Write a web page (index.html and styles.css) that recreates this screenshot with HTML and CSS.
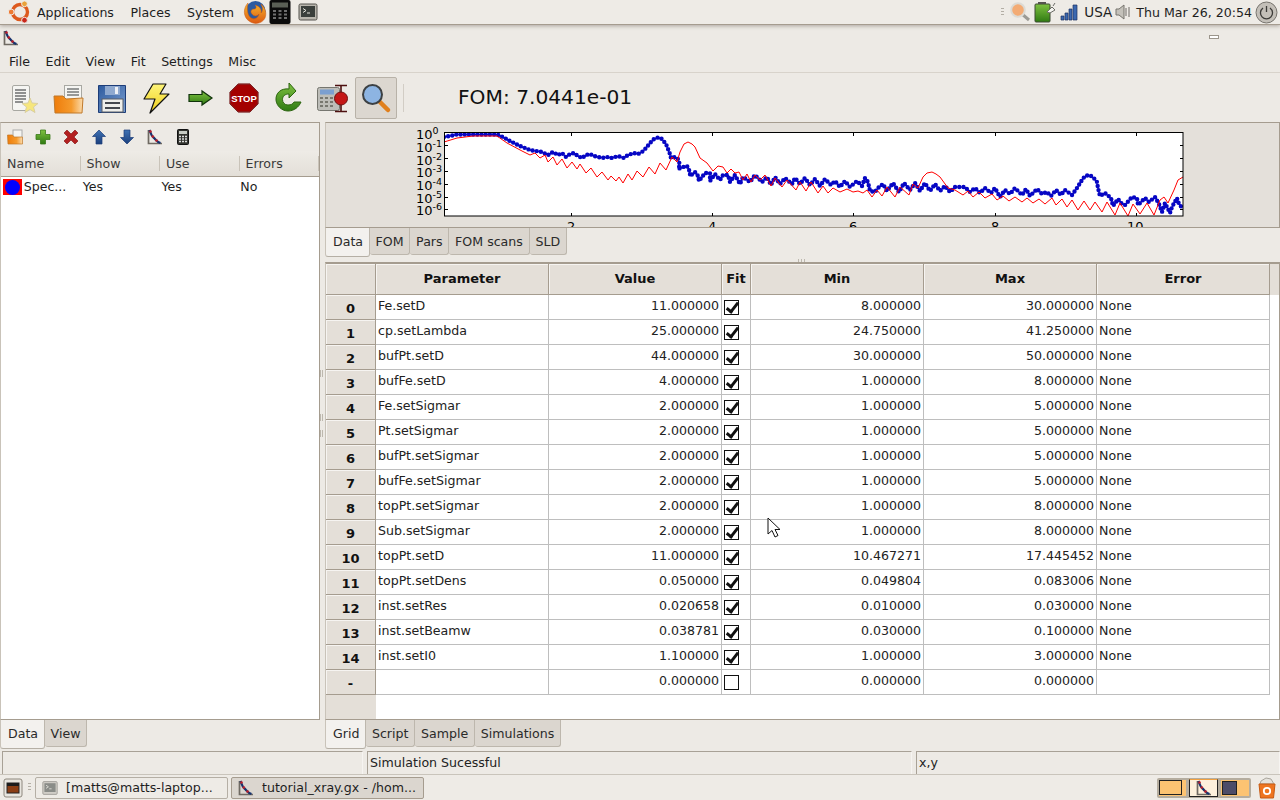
FILE: index.html
```html
<!DOCTYPE html>
<html lang="en">
<head>
    <meta charset="UTF-8">
    <title>GenX</title>
    <link rel="stylesheet" href="styles.css">
</head>
<body>
    <!-- shared icons -->
    <svg class="defs" width="0" height="0">
        <defs>
            <symbol id="logo" viewBox="0 0 16 16">
                <path d="M1.500 1v13.500H15" fill="none" stroke="#6f6a62" stroke-width="1.700"/>
                <path d="M2.500 1C4 5 4.500 7 6.500 8.500s2.500 4 7 5.500" fill="none" stroke="#16336e" stroke-width="2.200"/>
                <circle cx="3.500" cy="2.500" r="1.300" fill="#c0202a"/>
                <circle cx="5.800" cy="7.500" r="1.300" fill="#c0202a"/>
                <circle cx="9.500" cy="11.500" r="1.300" fill="#c0202a"/>
            </symbol>
            <symbol id="term" viewBox="0 0 20 20">
                <rect x="1" y="2" width="18" height="16" rx="1.500" fill="#b9b6ae" stroke="#55534e"/>
                <rect x="3" y="4" width="14" height="11" fill="#3a3f3c"/>
                <path d="M5 6.500l3 2-3 2M9 11h3" fill="none" stroke="#e4e4dc"/>
            </symbol>
            <linearGradient id="orange" x1="0" x2="1" y1="0" y2="0">
                <stop offset="0" stop-color="#ee7c0a"/>
                <stop offset="0.6" stop-color="#f59a2c"/>
                <stop offset="1" stop-color="#fbdcae"/>
            </linearGradient>
            <linearGradient id="blue" x1="0" x2="1" y1="0" y2="1">
                <stop offset="0" stop-color="#2d5a9e"/>
                <stop offset="1" stop-color="#7b9fd0"/>
            </linearGradient>
            <linearGradient id="navy" x1="0" x2="0" y1="0" y2="1">
                <stop offset="0" stop-color="#3f72b4"/>
                <stop offset="1" stop-color="#1b3f7c"/>
            </linearGradient>
            <linearGradient id="green" x1="0" x2="0" y1="0" y2="1">
                <stop offset="0" stop-color="#7fc241"/>
                <stop offset="1" stop-color="#2f7a12"/>
            </linearGradient>
            <linearGradient id="yellow" x1="0" x2="0" y1="0" y2="1">
                <stop offset="0" stop-color="#fdf47a"/>
                <stop offset="1" stop-color="#f0cf1c"/>
            </linearGradient>
            <linearGradient id="fox" x1="0" x2="0" y1="0" y2="1">
                <stop offset="0" stop-color="#f6b52c"/>
                <stop offset="1" stop-color="#dc5a12"/>
            </linearGradient>
        </defs>
    </svg>

    <!-- top gnome panel -->
    <div class="top-panel">
        <div class="panel-left">
            <svg class="ubuntu" width="24" height="24" viewBox="0 0 24 24">
                <circle cx="12" cy="12" r="7.500" fill="none" stroke="#dd5a1e" stroke-width="3.400"/>
                <circle cx="3.200" cy="12" r="2.900" fill="#ee7a32" stroke="#eeebe6"/>
                <circle cx="16.500" cy="3.800" r="2.900" fill="#e9a23a" stroke="#eeebe6"/>
                <circle cx="16.500" cy="20.200" r="2.900" fill="#c9271c" stroke="#eeebe6"/>
            </svg>
            <span class="panel-menu">Applications</span>
            <span class="panel-menu">Places</span>
            <span class="panel-menu">System</span>
            <svg class="launcher" width="24" height="24" viewBox="0 0 24 24">
                <circle cx="12.500" cy="11" r="10" fill="#2c5aa0"/>
                <path d="M5 3C0 8 0 17 6 21c5 4 13 3 16-3 2-5 0-11-4-14 2 4 2 7 0 9 1-4-2-7-6-8 2 2 1 4-1 4-3 0-4 3-2 5 2 3 6 2 7 0-1 5-6 6-9 3C4 14 4 7 5 3z" fill="url(#fox)" stroke="#c9560f" stroke-width="0.500"/>
            </svg>
            <svg class="launcher calc" width="22" height="24" viewBox="0 0 22 24">
                <rect x="0.500" y="0" width="21" height="24" rx="2" fill="#0b0b0b"/>
                <rect x="3" y="2.500" width="16" height="5" fill="#5a5f55"/>
                <path d="M4 11h3M9.500 11h3M15 11h3M4 14.500h3M9.500 14.500h3M15 14.500h3M4 18h3M9.500 18h3M15 18h3" stroke="#6f6f6f" stroke-width="2"/>
            </svg>
            <svg class="launcher term-launch" width="20" height="20"><use href="#term"/></svg>
        </div>
        <div class="panel-right">
            <span class="handle"></span>
            <svg class="tray" width="20" height="20" viewBox="0 0 20 20">
                <path d="M12 12l7 6" stroke="#9c9a94" stroke-width="3"/>
                <circle cx="8" cy="8" r="6.800" fill="#f3ab74" stroke="#dcdad4" stroke-width="2"/>
            </svg>
            <svg class="tray" width="22" height="22" viewBox="0 0 22 22">
                <rect x="1" y="3" width="15" height="18" rx="1" fill="url(#green)" stroke="#3d4a33"/>
                <rect x="4" y="1" width="8" height="2" fill="#55534e"/>
                <path d="M13 11l5-5 3 3-5 3z" fill="#f4f4f0" stroke="#6b6b66"/>
                <path d="M19 5l2-3" stroke="#6b6b66"/>
            </svg>
            <svg class="tray tray-wide" width="18" height="17" viewBox="0 0 18 17">
                <path d="M1 12h3v4H1zM5 9h3v7H5zM9 5h3v11H9zM13 1h4v15h-4z" fill="#3b68b0" stroke="#1d3160" stroke-width="0.700"/>
            </svg>
            <span class="panel-label usa">USA</span>
            <svg class="tray tray-speaker" width="16" height="16" viewBox="0 0 16 16">
                <path d="M1 5h3l5-4v14l-5-4H1z" fill="#c4c1ba" stroke="#77746e"/>
                <path d="M11 4v8M14 3v10" stroke="#6e6b66"/>
            </svg>
            <span class="panel-label clock">Thu Mar 26, 20:54</span>
            <svg class="tray power" width="23" height="23" viewBox="0 0 23 23">
                <circle cx="11.500" cy="11.500" r="10.500" fill="#c3bfb8" stroke="#77746e"/>
                <path d="M8 7a6 6 0 1 0 7 0M11.500 5v6" fill="none" stroke="#3c3b38" stroke-width="1.300"/>
            </svg>
        </div>
    </div>

    <!-- window title bar -->
    <div class="title-bar">
        <svg width="16" height="16"><use href="#logo"/></svg>
        <span class="min-btn"></span>
    </div>

    <div class="menu-bar">
        <span>File</span><span>Edit</span><span>View</span><span>Fit</span><span>Settings</span><span>Misc</span>
    </div>

    <div class="tool-bar">
        <span class="tool">
            <svg width="32" height="32" viewBox="0 0 32 32">
                <rect x="4.500" y="3.500" width="17" height="25" rx="1.500" fill="#f5f5f2" stroke="#a8a8a2"/>
                <path d="M7 8h11M7 11h11M7 14h11M7 17h11M7 20h8" stroke="#6d6f70" stroke-width="1.300"/>
                <path d="M22 16l2 5 6 .5-4.500 3.500 1.500 5.500-5-3-5 3 1.500-5.500L14 21.500l6-.5z" fill="#f6e67c" stroke="#d9cfa0"/>
            </svg>
        </span>
        <span class="tool">
            <svg width="32" height="32" viewBox="0 0 32 32">
                <rect x="12.500" y="3.500" width="17" height="20" fill="#f5f5f2" stroke="#a8a8a2"/>
                <path d="M15 7h12M15 10h12M15 13h12" stroke="#77797a" stroke-width="1.300"/>
                <path d="M2 14h9l3 3 17-1-1 15H3z" fill="url(#orange)" stroke="#c0792a"/>
            </svg>
        </span>
        <span class="tool">
            <svg width="32" height="32" viewBox="0 0 32 32">
                <path d="M2.500 3.500h27v27h-27z" fill="url(#blue)" stroke="#1d3d78"/>
                <rect x="9" y="4" width="15" height="9" fill="#8fa9cf"/>
                <rect x="19" y="5" width="3" height="7" fill="#eef1f6"/>
                <rect x="6" y="17" width="21" height="13" fill="#eeeeea" stroke="#5b5f66"/>
                <path d="M9 21h15M9 26h15" stroke="#44484e" stroke-width="2"/>
            </svg>
        </span>
        <span class="tool">
            <svg width="32" height="32" viewBox="0 0 32 32">
                <path d="M13 2h13l-6 10h9L10 31l5-14H4z" fill="url(#yellow)" stroke="#111" stroke-width="1.200" stroke-linejoin="round"/>
            </svg>
        </span>
        <span class="tool">
            <svg width="32" height="32" viewBox="0 0 32 32">
                <path d="M5 12.500h13V9l10 7-10 7v-3.500H5z" fill="url(#green)" stroke="#10330a" stroke-width="1.200"/>
            </svg>
        </span>
        <span class="tool">
            <svg width="32" height="32" viewBox="0 0 32 32">
                <path d="M10 1h12l9 9v12l-9 9H10l-9-9V10z" fill="#a40000" stroke="#e8e8e4" stroke-width="1"/>
                <path d="M10.300 2h11.400L30 10.300v11.400L21.700 30H10.300L2 21.700V10.300z" fill="none" stroke="#555" stroke-width="0.600"/>
                <text x="16" y="20" class="stop-text">STOP</text>
            </svg>
        </span>
        <span class="tool">
            <svg width="32" height="32" viewBox="0 0 32 32">
                <path d="M17 7C9 6 3.500 11 4 18c.5 6 6 11 12 11s11-4 13-9h-7c-1 2-3 3-6 3-3.500 0-5.500-2.500-5.500-5.500C10.500 14 13 12 17 12v4l7-7-7-8z" fill="url(#green)" stroke="#2c6410"/>
            </svg>
        </span>
        <span class="tool">
            <svg width="32" height="32" viewBox="0 0 32 32">
                <rect x="1.500" y="5.500" width="22" height="23" rx="2" fill="#bdbdb8" stroke="#76766f"/>
                <rect x="4" y="7.500" width="14" height="5" fill="#7b9fd0"/>
                <path d="M4 16h3M9 16h3M14 16h3M4 20h3M9 20h3M14 20h3M4 24h3M9 24h3M14 24h3" stroke="#77776f" stroke-width="2"/>
                <path d="M20 3.500h12M20 29.500h12M26 3.500v26" stroke="#4d1010" stroke-width="1.600" transform="translate(-1 0)"/>
                <circle cx="25" cy="16.500" r="6.500" fill="#c41616" stroke="#701010"/>
            </svg>
        </span>
        <span class="tool tool-on">
            <svg width="32" height="32" viewBox="0 0 32 32">
                <path d="M19 19l9 9" stroke="#e0801e" stroke-width="4.500" stroke-linecap="round"/>
                <circle cx="12.500" cy="12.500" r="9.500" fill="#8db4e2" stroke="#3c4043" stroke-width="2"/>
            </svg>
        </span>
        <span class="tool-sep"></span>
        <span class="fom">FOM: 7.0441e-01</span>
    </div>

    <div class="main">
        <!-- left pane: data sets -->
        <div class="side">
            <div class="side-box">
                <div class="side-tools">
                    <svg width="16" height="16" viewBox="0 0 16 16">
                        <rect x="6" y="1" width="9" height="9" fill="#f5f5f2" stroke="#aaa"/>
                        <path d="M0.500 6h5l1.500 2h8.500v7H1z" fill="url(#orange)" stroke="#c0792a" stroke-width="0.700"/>
                    </svg>
                    <svg width="16" height="16" viewBox="0 0 16 16">
                        <path d="M5.500 1h5v4.500H15v5h-4.500V15h-5v-4.500H1v-5h4.500z" fill="url(#green)" stroke="#3a7a1a" stroke-width="0.800"/>
                    </svg>
                    <svg width="16" height="16" viewBox="0 0 16 16">
                        <path d="M4 1l4 4 4-4 3 3-4 4 4 4-3 3-4-4-4 4-3-3 4-4-4-4z" fill="#b32020" stroke="#8a1d1d" stroke-width="0.700"/>
                    </svg>
                    <svg width="16" height="16" viewBox="0 0 16 16">
                        <path d="M8 1l6.500 6.500H11V15H5V7.500H1.500z" fill="url(#navy)" stroke="#1d3d78" stroke-width="0.700"/>
                    </svg>
                    <svg width="16" height="16" viewBox="0 0 16 16">
                        <path d="M8 15l6.500-6.500H11V1H5v7.500H1.500z" fill="url(#navy)" stroke="#1d3d78" stroke-width="0.700"/>
                    </svg>
                    <svg width="16" height="16"><use href="#logo"/></svg>
                    <svg width="16" height="16" viewBox="0 0 16 16">
                        <rect x="2.500" y="0.500" width="11" height="15" rx="1" fill="#33342f" stroke="#111"/>
                        <rect x="4" y="2" width="8" height="3" fill="#c8ccc4"/>
                        <path d="M4 7.500h2M7 7.500h2M10 7.500h2M4 10h2M7 10h2M10 10h2M4 12.500h2M7 12.500h2M10 12.500h2" stroke="#ddd" stroke-width="1.300"/>
                    </svg>
                </div>
                <div class="list-head">
                    <span>Name</span><span>Show</span><span>Use</span><span>Errors</span>
                </div>
                <div class="list-row">
                    <span class="swatch"><i></i></span>
                    <span class="list-name">Spec...</span>
                    <span class="list-col">Yes</span>
                    <span class="list-col">Yes</span>
                    <span class="list-col">No</span>
                </div>
            </div>
            <div class="tabs">
                <span class="tab on">Data</span><span class="tab">View</span>
            </div>
        </div>

        <div class="sash">
            <i class="grip g1"></i><i class="grip g2"></i><i class="grip g3"></i>
        </div>

        <!-- right pane -->
        <div class="work">
            <div class="plot-box">
                <svg class="plot" width="954" height="104" viewBox="326 123 954 104">
                    <defs>
                        <clipPath id="axes"><rect x="444" y="132" width="739" height="84"/></clipPath>
                    </defs>
                    <rect x="444" y="132" width="739" height="84" fill="#fff"/>
                    <g clip-path="url(#axes)" fill="none">
                        <path class="blue-dots" d="M444 137L450 136 456 134.500 497 134.500 503 137 510 141 520 146 530 150 536 151 542 152 548 155 553 152 558 155 562 153 566 157 570 154 574 153 578 156 582 158 586 155 590 154 594 156 598 157 602 158 608 157 612 158 618 156 624 158 628 155 634 153 638 154 642 152 646 148 650 143 654 139 658 137.500 662 139 666 144 668 149 670 154 671 158 675 157 678 159 680 165 678 169 683 167 687 166 690 172 690 176 695 172 698 176 699 181 705 173 710 173 710 181 715 174 720 180 723 175 728 175 730 182 735 175 740 184 743 177 750 182 755 175 762 182 767 177 771 185 775 177 780 184 785 178 792 184 795 178 800 184 805 178 810 185 815 179 820 186 825 179 831 185 835 181 840 187 845 181 850 187 857 181 862 186 865 178 868 182 870 191 875 192 878 188 883 184 887 191 893 183 899 192 904 183 910 190 915 183 920 191 925 183 930 191 935 184 940 191 945 186 950 192 955 187 965 187 970 192 975 188 980 193 985 188 991 193 995 188 1000 197 1005 190 1010 194 1015 188 1022 195 1026 189 1030 196 1037 189 1042 194 1047 192 1051 196 1056 190 1061 195 1065 190 1072 195 1077 188 1082 180 1085 176 1089 175 1093 177 1097 182 1098 188 1100 196 1105 193 1111 198 1113 206 1118 199 1121 203 1125 205 1132 197 1137 198 1138 205 1145 198 1149 202 1155 197 1159 204 1162 212 1165 203 1170 213 1172 207 1177 198 1178 202 1182 208"/>
                        <path class="red-line" d="M444 142L457 138 473 136 497 136 507 143 522 151 530 155 535 153 540 158 545 155 548 162 553 157 557 165 562 159 567 168 572 162 577 169 580 164 586 173 591 168 597 177 602 172 608 180 611 176 616 181 619 177 623 183 628 174 632 180 637 171 643 177 649 167 655 174 660 163 666 170 672 157 677 162 680 152 684 144 688 142 692 144 695 147 700 158 707 163 713 171 718 166 723 167 727 173 731 169 735 173 739 172 743 180 747 174 751 182 755 175 760 180 765 175 771 186 775 178 782 187 787 180 796 190 800 182 806 191 811 182 818 193 823 186 828 193 833 188 840 192 847 189 853 192 858 191 863 193 867 190 872 197 877 190 882 196 887 187 895 197 900 187 909 195 913 184 918 188 923 177 927 173 932 172 936 174 940 177 948 188 955 190 963 195 968 191 973 197 979 192 985 198 992 194 997 200 1003 196 1009 201 1015 197 1022 202 1027 198 1033 203 1039 199 1045 204 1052 198 1056 205 1062 199 1067 207 1072 200 1078 210 1084 201 1090 210 1095 202 1102 212 1107 202 1115 215 1120 203 1128 216 1133 204 1140 214 1147 203 1154 215 1160 200 1164 197 1168 203 1174 190 1178 180 1183 177"/>
                    </g>
                    <rect x="444.500" y="132.500" width="738.500" height="83.500" fill="none" stroke="#000"/>
                    <path class="ticks" d="M571.500 133v3M712.500 133v3M853.500 133v3M995.500 133v3M1136.500 133v3M571.500 216v-3M712.500 216v-3M853.500 216v-3M995.500 216v-3M1136.500 216v-3M445 145.500h3M445 158.500h3M445 171.500h3M445 184.500h3M445 197.500h3M445 209.500h3M1183 145.500h-3M1183 158.500h-3M1183 171.500h-3M1183 184.500h-3M1183 197.500h-3M1183 209.500h-3"/>
                    <g class="tick-label">
                        <text x="416" y="139">10<tspan class="sup" dy="-5">0</tspan></text>
                        <text x="416" y="152">10<tspan class="sup" dy="-5">-1</tspan></text>
                        <text x="416" y="165">10<tspan class="sup" dy="-5">-2</tspan></text>
                        <text x="416" y="177">10<tspan class="sup" dy="-5">-3</tspan></text>
                        <text x="416" y="190">10<tspan class="sup" dy="-5">-4</tspan></text>
                        <text x="416" y="203">10<tspan class="sup" dy="-5">-5</tspan></text>
                        <text x="416" y="215">10<tspan class="sup" dy="-5">-6</tspan></text>
                        <text x="567" y="231">2</text>
                        <text x="708" y="231">4</text>
                        <text x="849" y="231">6</text>
                        <text x="991" y="231">8</text>
                        <text x="1127" y="231">10</text>
                    </g>
                </svg>
            </div>
            <div class="tabs tabs-plot">
                <span class="tab on">Data</span><span class="tab">FOM</span><span class="tab">Pars</span><span class="tab">FOM scans</span><span class="tab">SLD</span>
            </div>
            <div class="pane-sash"><i></i></div>
            <div class="grid-box">
                <table class="grid">
                    <colgroup>
                        <col class="c-row"><col class="c-wide"><col class="c-wide"><col class="c-fit"><col class="c-wide"><col class="c-wide"><col class="c-wide">
                    </colgroup>
                    <thead>
                        <tr><th></th><th>Parameter</th><th>Value</th><th>Fit</th><th>Min</th><th>Max</th><th>Error</th></tr>
                    </thead>
                    <tbody>
                        <tr><th>0</th><td>Fe.setD</td><td class="num">11.000000</td><td class="chk"><i class="box on"></i></td><td class="num">8.000000</td><td class="num">30.000000</td><td>None</td></tr>
                        <tr><th>1</th><td>cp.setLambda</td><td class="num">25.000000</td><td class="chk"><i class="box on"></i></td><td class="num">24.750000</td><td class="num">41.250000</td><td>None</td></tr>
                        <tr><th>2</th><td>bufPt.setD</td><td class="num">44.000000</td><td class="chk"><i class="box on"></i></td><td class="num">30.000000</td><td class="num">50.000000</td><td>None</td></tr>
                        <tr><th>3</th><td>bufFe.setD</td><td class="num">4.000000</td><td class="chk"><i class="box on"></i></td><td class="num">1.000000</td><td class="num">8.000000</td><td>None</td></tr>
                        <tr><th>4</th><td>Fe.setSigmar</td><td class="num">2.000000</td><td class="chk"><i class="box on"></i></td><td class="num">1.000000</td><td class="num">5.000000</td><td>None</td></tr>
                        <tr><th>5</th><td>Pt.setSigmar</td><td class="num">2.000000</td><td class="chk"><i class="box on"></i></td><td class="num">1.000000</td><td class="num">5.000000</td><td>None</td></tr>
                        <tr><th>6</th><td>bufPt.setSigmar</td><td class="num">2.000000</td><td class="chk"><i class="box on"></i></td><td class="num">1.000000</td><td class="num">5.000000</td><td>None</td></tr>
                        <tr><th>7</th><td>bufFe.setSigmar</td><td class="num">2.000000</td><td class="chk"><i class="box on"></i></td><td class="num">1.000000</td><td class="num">5.000000</td><td>None</td></tr>
                        <tr><th>8</th><td>topPt.setSigmar</td><td class="num">2.000000</td><td class="chk"><i class="box on"></i></td><td class="num">1.000000</td><td class="num">8.000000</td><td>None</td></tr>
                        <tr><th>9</th><td>Sub.setSigmar</td><td class="num">2.000000</td><td class="chk"><i class="box on"></i></td><td class="num">1.000000</td><td class="num">8.000000</td><td>None</td></tr>
                        <tr><th>10</th><td>topPt.setD</td><td class="num">11.000000</td><td class="chk"><i class="box on"></i></td><td class="num">10.467271</td><td class="num">17.445452</td><td>None</td></tr>
                        <tr><th>11</th><td>topPt.setDens</td><td class="num">0.050000</td><td class="chk"><i class="box on"></i></td><td class="num">0.049804</td><td class="num">0.083006</td><td>None</td></tr>
                        <tr><th>12</th><td>inst.setRes</td><td class="num">0.020658</td><td class="chk"><i class="box on"></i></td><td class="num">0.010000</td><td class="num">0.030000</td><td>None</td></tr>
                        <tr><th>13</th><td>inst.setBeamw</td><td class="num">0.038781</td><td class="chk"><i class="box on"></i></td><td class="num">0.030000</td><td class="num">0.100000</td><td>None</td></tr>
                        <tr><th>14</th><td>inst.setI0</td><td class="num">1.100000</td><td class="chk"><i class="box on"></i></td><td class="num">1.000000</td><td class="num">3.000000</td><td>None</td></tr>
                        <tr><th>-</th><td></td><td class="num">0.000000</td><td class="chk"><i class="box"></i></td><td class="num">0.000000</td><td class="num">0.000000</td><td></td></tr>
                    </tbody>
                </table>
                <div class="grid-rest"></div>
            </div>
            <div class="tabs">
                <span class="tab on">Grid</span><span class="tab">Script</span><span class="tab">Sample</span><span class="tab">Simulations</span>
            </div>
        </div>
    </div>

    <div class="status-bar">
        <span class="field f1"></span>
        <span class="field f2">Simulation Sucessful</span>
        <span class="field f3">x,y</span>
    </div>

    <!-- bottom gnome panel -->
    <div class="bottom-panel">
        <svg class="show-desk" width="20" height="20" viewBox="0 0 20 20">
            <rect x="1" y="1" width="18" height="18" rx="2" fill="#e8e5df" stroke="#8e887e"/>
            <rect x="4" y="5" width="12" height="10" fill="#8a3d14" stroke="#222"/>
            <rect x="4" y="5" width="12" height="3" fill="#1c1c1c"/>
        </svg>
        <span class="handle low"></span>
        <div class="task">
            <svg class="dim" width="16" height="16"><use href="#term"/></svg>
            <span>[matts@matts-laptop...</span>
        </div>
        <div class="task task-on">
            <svg width="16" height="16"><use href="#logo"/></svg>
            <span>tutorial_xray.gx - /hom...</span>
        </div>
        <div class="pager">
            <span class="desk d1"><i></i></span>
            <span class="desk d2"><svg width="16" height="16"><use href="#logo"/></svg></span>
            <span class="desk d3"><i></i></span>
        </div>
        <svg class="trash" width="20" height="22" viewBox="0 0 20 22">
            <path d="M3 7l1-3 5-3 5 1 3 5z" fill="#e5e2dc" stroke="#a9a59c"/>
            <path d="M2 7h16l-1.500 14h-13z" fill="#ee7520" stroke="#c65a12"/>
            <circle cx="10" cy="14" r="3.200" fill="none" stroke="#fff" stroke-width="1.800"/>
        </svg>
    </div>

    <!-- mouse pointer -->
    <svg class="cursor" width="14" height="22" viewBox="0 0 14 22">
        <path d="M1 1v16l4-3.500 3 6.500 3-1.500-3-6h5z" fill="#fff" stroke="#111"/>
    </svg>
</body>
</html>
```

FILE: styles.css
```css
/* base */
html, body {
    margin: 0;
    padding: 0;
}

body {
    position: relative;
    width: 1280px;
    height: 800px;
    overflow: hidden;
    display: flex;
    flex-direction: column;
    background-color: #edeae5;
    color: #1e1e1e;
    font-family: "DejaVu Sans", sans-serif;
    font-size: 12.600px;
}

svg {
    display: block;
    flex: none;
}

.defs {
    position: absolute;
}

/* top panel */
.top-panel {
    height: 25px;
    flex: none;
    display: flex;
    justify-content: space-between;
    box-sizing: border-box;
    border-bottom: 1px solid #a59c8f;
    box-shadow: 0 1px 4px rgba(90, 80, 70, 0.45);
    background-color: #eeebe6;
    position: relative;
}

.panel-left, .panel-right {
    display: flex;
    align-items: center;
}

.ubuntu {
    margin-left: 8px;
    margin-right: 5px;
}

.panel-menu {
    margin-right: 16.500px;
}

.launcher {
    margin-left: -7px;
    margin-right: 2px;
}

.calc {
    margin-left: 0;
    margin-right: 0;
}

.term-launch {
    margin-left: 7px;
    margin-right: 0;
}

.handle {
    width: 3px;
    height: 9px;
    margin-right: 6px;
    background: repeating-linear-gradient(#b3aea5 0 1px, transparent 1px 3px);
}

.tray {
    margin-right: 4px;
}

.tray-wide {
    margin-right: 6px;
}

.tray-speaker {
    margin-right: 5px;
}

.usa {
    margin-right: 3px;
    font-size: 13.500px;
}

.clock {
    margin-right: 3px;
}

.power {
    margin-right: 2px;
}

/* window chrome */
.title-bar {
    height: 25px;
    flex: none;
    display: flex;
    align-items: center;
    justify-content: space-between;
    padding: 0 61px 0 3px;
    box-sizing: border-box;
}

.min-btn {
    width: 8px;
    height: 2px;
    border: 1px solid #9c968c;
    background-color: #fff;
    margin-top: -1px;
}

.menu-bar {
    height: 23px;
    flex: none;
    display: flex;
    gap: 15.500px;
    align-items: center;
    padding-left: 9px;
    box-sizing: border-box;
    border-bottom: 1px solid #d8d3cb;
}

.tool-bar {
    height: 49px;
    flex: none;
    display: flex;
    align-items: center;
    padding-left: 2px;
    box-sizing: border-box;
}

.tool {
    width: 44px;
    height: 42px;
    display: flex;
    align-items: center;
    justify-content: center;
    box-sizing: border-box;
}

.tool-on {
    width: 42px;
    margin-left: 1px;
    background-color: #dcd7d0;
    border: 1px solid #b8b2a8;
    border-radius: 2px;
}

.tool-sep {
    width: 1px;
    height: 28px;
    margin-left: 6px;
    background-color: #d2cdc5;
}

.fom {
    margin-left: 54px;
    margin-top: -2px;
    font-size: 20.200px;
    color: #111;
}

.stop-text {
    font-family: "Liberation Sans", sans-serif;
    font-size: 9.500px;
    font-weight: bold;
    fill: #fff;
    text-anchor: middle;
}

/* main area */
.main {
    height: 629px;
    flex: none;
    display: flex;
}

.side {
    width: 320px;
    flex: none;
    display: flex;
    flex-direction: column;
}

.side-box {
    flex: 1;
    display: flex;
    flex-direction: column;
    background-color: #fff;
    border: 1px solid #a59c8f;
    border-left-color: #c9c3b9;
    box-sizing: border-box;
}

.side-tools {
    height: 28px;
    flex: none;
    display: flex;
    gap: 12px;
    align-items: center;
    padding-left: 6px;
    background-color: #edeae5;
}

.list-head {
    height: 26px;
    flex: none;
    display: flex;
    box-sizing: border-box;
    align-items: center;
    border-bottom: 1px solid #a59c8f;
    background: linear-gradient(#eeebe6, #e3dfd8);
    color: #3a3a3a;
}

.list-head span {
    width: 80px;
    box-sizing: border-box;
    padding-left: 6px;
    border-right: 1px solid #c9c3b9;
}

.list-row {
    height: 20px;
    flex: none;
    display: flex;
    align-items: center;
}

.swatch {
    width: 19px;
    height: 16px;
    margin-left: 2px;
    background-color: #f00;
    display: flex;
    align-items: center;
    justify-content: center;
}

.swatch i {
    width: 15px;
    height: 15px;
    border-radius: 50%;
    background-color: #00f;
}

.list-name {
    width: 62px;
    padding-left: 2px;
    padding-bottom: 2px;
    box-sizing: border-box;
}

.list-col {
    width: 80px;
    padding-bottom: 2px;
}

.tabs {
    height: 31px;
    flex: none;
    display: flex;
    align-items: flex-start;
}

.tab {
    height: 27px;
    line-height: 27px;
    padding: 0 5.750px;
    box-sizing: border-box;
    background-color: #dbd6cf;
    border: 1px solid #bdb7ad;
    border-top: none;
    border-left: none;
    border-radius: 0 0 3px 3px;
    color: #2a2a2a;
}

.tab.on {
    height: 29px;
    padding-left: 7px;
    line-height: 28px;
    background-color: #f3f1ee;
    border-left: 1px solid #c9c3b9;
    border-bottom-color: #b5afa5;
}

.sash {
    width: 5px;
    flex: none;
    position: relative;
}

.grip {
    position: absolute;
    left: 0;
    width: 3px;
    height: 7px;
    background: repeating-linear-gradient(90deg, #bdb8ae 0 1px, transparent 1px 2px);
}

.g1 { top: 248px; }
.g2 { top: 292px; }
.g3 { top: 308px; }

.work {
    flex: 1;
    min-width: 0;
    display: flex;
    flex-direction: column;
}

.plot-box {
    height: 106px;
    flex: none;
    box-sizing: border-box;
    border: 1px solid #a59c8f;
    border-left-color: #c9c3b9;
    background-color: #e4e0da;
}

.blue-dots {
    stroke: #0606c4;
    stroke-width: 4.400;
    stroke-linecap: round;
    stroke-dasharray: 0 4.200;
}

.red-line {
    stroke: #f00;
    stroke-width: 1;
}

.ticks {
    stroke: #000;
    stroke-width: 1;
    fill: none;
}

.tick-label {
    font-size: 13px;
    fill: #000;
}

.sup {
    font-size: 9.500px;
}

.tabs-plot {
    height: 29px;
}

.pane-sash {
    height: 5px;
    flex: none;
    position: relative;
}

.pane-sash i {
    position: absolute;
    left: 473px;
    top: 2px;
    width: 7px;
    height: 3px;
    background: repeating-linear-gradient(90deg, #bdb8ae 0 1px, transparent 1px 3px);
}

/* parameter grid */
.grid-box {
    flex: 1;
    min-height: 0;
    display: flex;
    flex-direction: column;
    box-sizing: border-box;
    border: 1px solid #a59c8f;
    border-left-color: #c9c3b9;
    border-top: 2px solid #a59c8f;
    background:
        linear-gradient(#e4dfd8, #e4dfd8) 0 0 / 50px 100% no-repeat,
        linear-gradient(#e4dfd8, #e4dfd8) 0 0 / 100% 31px no-repeat,
        #fff;
}

.grid {
    table-layout: fixed;
    width: 944px;
    border-collapse: separate;
    border-spacing: 0;
    flex: none;
}

.c-row { width: 50px; }
.c-wide { width: 173px; }
.c-fit { width: 29px; }

.grid th, .grid td {
    box-sizing: border-box;
    padding: 0 2px 3px;
    height: 25px;
    color: #222;
    overflow: hidden;
    white-space: nowrap;
}

.grid th {
    background-color: #e4dfd8;
    box-shadow: inset 1px 1px 0 #f6f4f1;
    border-right: 1px solid #a59c8f;
    border-bottom: 1px solid #a59c8f;
    color: #111;
    padding-bottom: 0;
    font-size: 13px;
}

.grid thead th {
    height: 31px;
    padding-bottom: 2px;
}

.grid tbody th {
    padding-top: 2px;
}

.grid td {
    background-color: #fff;
    border-right: 1px solid #bebebe;
    border-bottom: 1px solid #bebebe;
}

.grid .num {
    text-align: right;
}

.grid .chk {
    padding: 1px 0 0 2px;
}

.box {
    display: block;
    position: relative;
    width: 13px;
    height: 13px;
    border: 1px solid #111;
    background-color: #fff;
}

.box.on::after {
    content: "";
    position: absolute;
    left: 4px;
    top: -1px;
    width: 4px;
    height: 10px;
    border: solid #111;
    border-width: 0 3px 3px 0;
    transform: rotate(38deg);
}

.grid-rest {
    flex: 1;
}

/* status bar */
.status-bar {
    height: 23px;
    flex: none;
    display: flex;
    gap: 4px;
    padding-left: 2px;
    box-sizing: border-box;
}

.field {
    box-sizing: border-box;
    padding-left: 2px;
    line-height: 21px;
    border-top: 1px solid #a8a196;
    border-left: 1px solid #a8a196;
    border-right: 1px solid #f6f4f1;
    color: #222;
}

.f1 { width: 361px; }
.f2 { width: 545px; }
.f3 { flex: 1; }

/* bottom panel */
.bottom-panel {
    height: 26px;
    flex: none;
    display: flex;
    align-items: center;
    box-sizing: border-box;
    border-top: 1px solid #c9c4bb;
    background-color: #eeebe6;
    padding-left: 3px;
}

.show-desk {
    margin-right: 5px;
}

.handle.low {
    margin-right: 4px;
}

.task {
    width: 193px;
    height: 22px;
    box-sizing: border-box;
    margin-right: 3px;
    display: flex;
    align-items: center;
    gap: 8px;
    padding-left: 6px;
    border: 1px solid #b5afa5;
    border-radius: 2px;
    background-color: #eeebe6;
}

.task-on {
    background-color: #dbd6cf;
    border-color: #a59c8f;
}

.dim {
    opacity: 0.55;
}

.pager {
    margin-left: auto;
    width: 94px;
    height: 20px;
    display: flex;
    gap: 2px;
    padding: 1px;
    box-sizing: border-box;
    background-color: #b5ad9f;
    border-radius: 2px;
}

.desk {
    flex: 1;
    display: flex;
    align-items: center;
    justify-content: center;
    box-sizing: border-box;
    border: 1px solid #b5ad9f;
    background-color: #fcc372;
}

.desk.d1 {
    justify-content: flex-start;
}

.desk.d1 i {
    width: 23px;
    height: 15px;
    border: 1px solid #222;
    background-color: #fcc372;
    box-sizing: border-box;
}

.desk.d2 {
    border-color: #222;
    border-top-color: #f0a040;
    background-color: #fdf0dc;
}

.desk.d3 {
    justify-content: flex-start;
    padding-left: 1px;
}

.desk.d3 i {
    width: 15px;
    height: 14px;
    border: 1px solid #222;
    background-color: #4d4c68;
    box-sizing: border-box;
}

.trash {
    margin-left: 6px;
    margin-right: 3px;
}

/* pointer lies over the grid */
.cursor {
    position: absolute;
    left: 767px;
    top: 517px;
}
```
